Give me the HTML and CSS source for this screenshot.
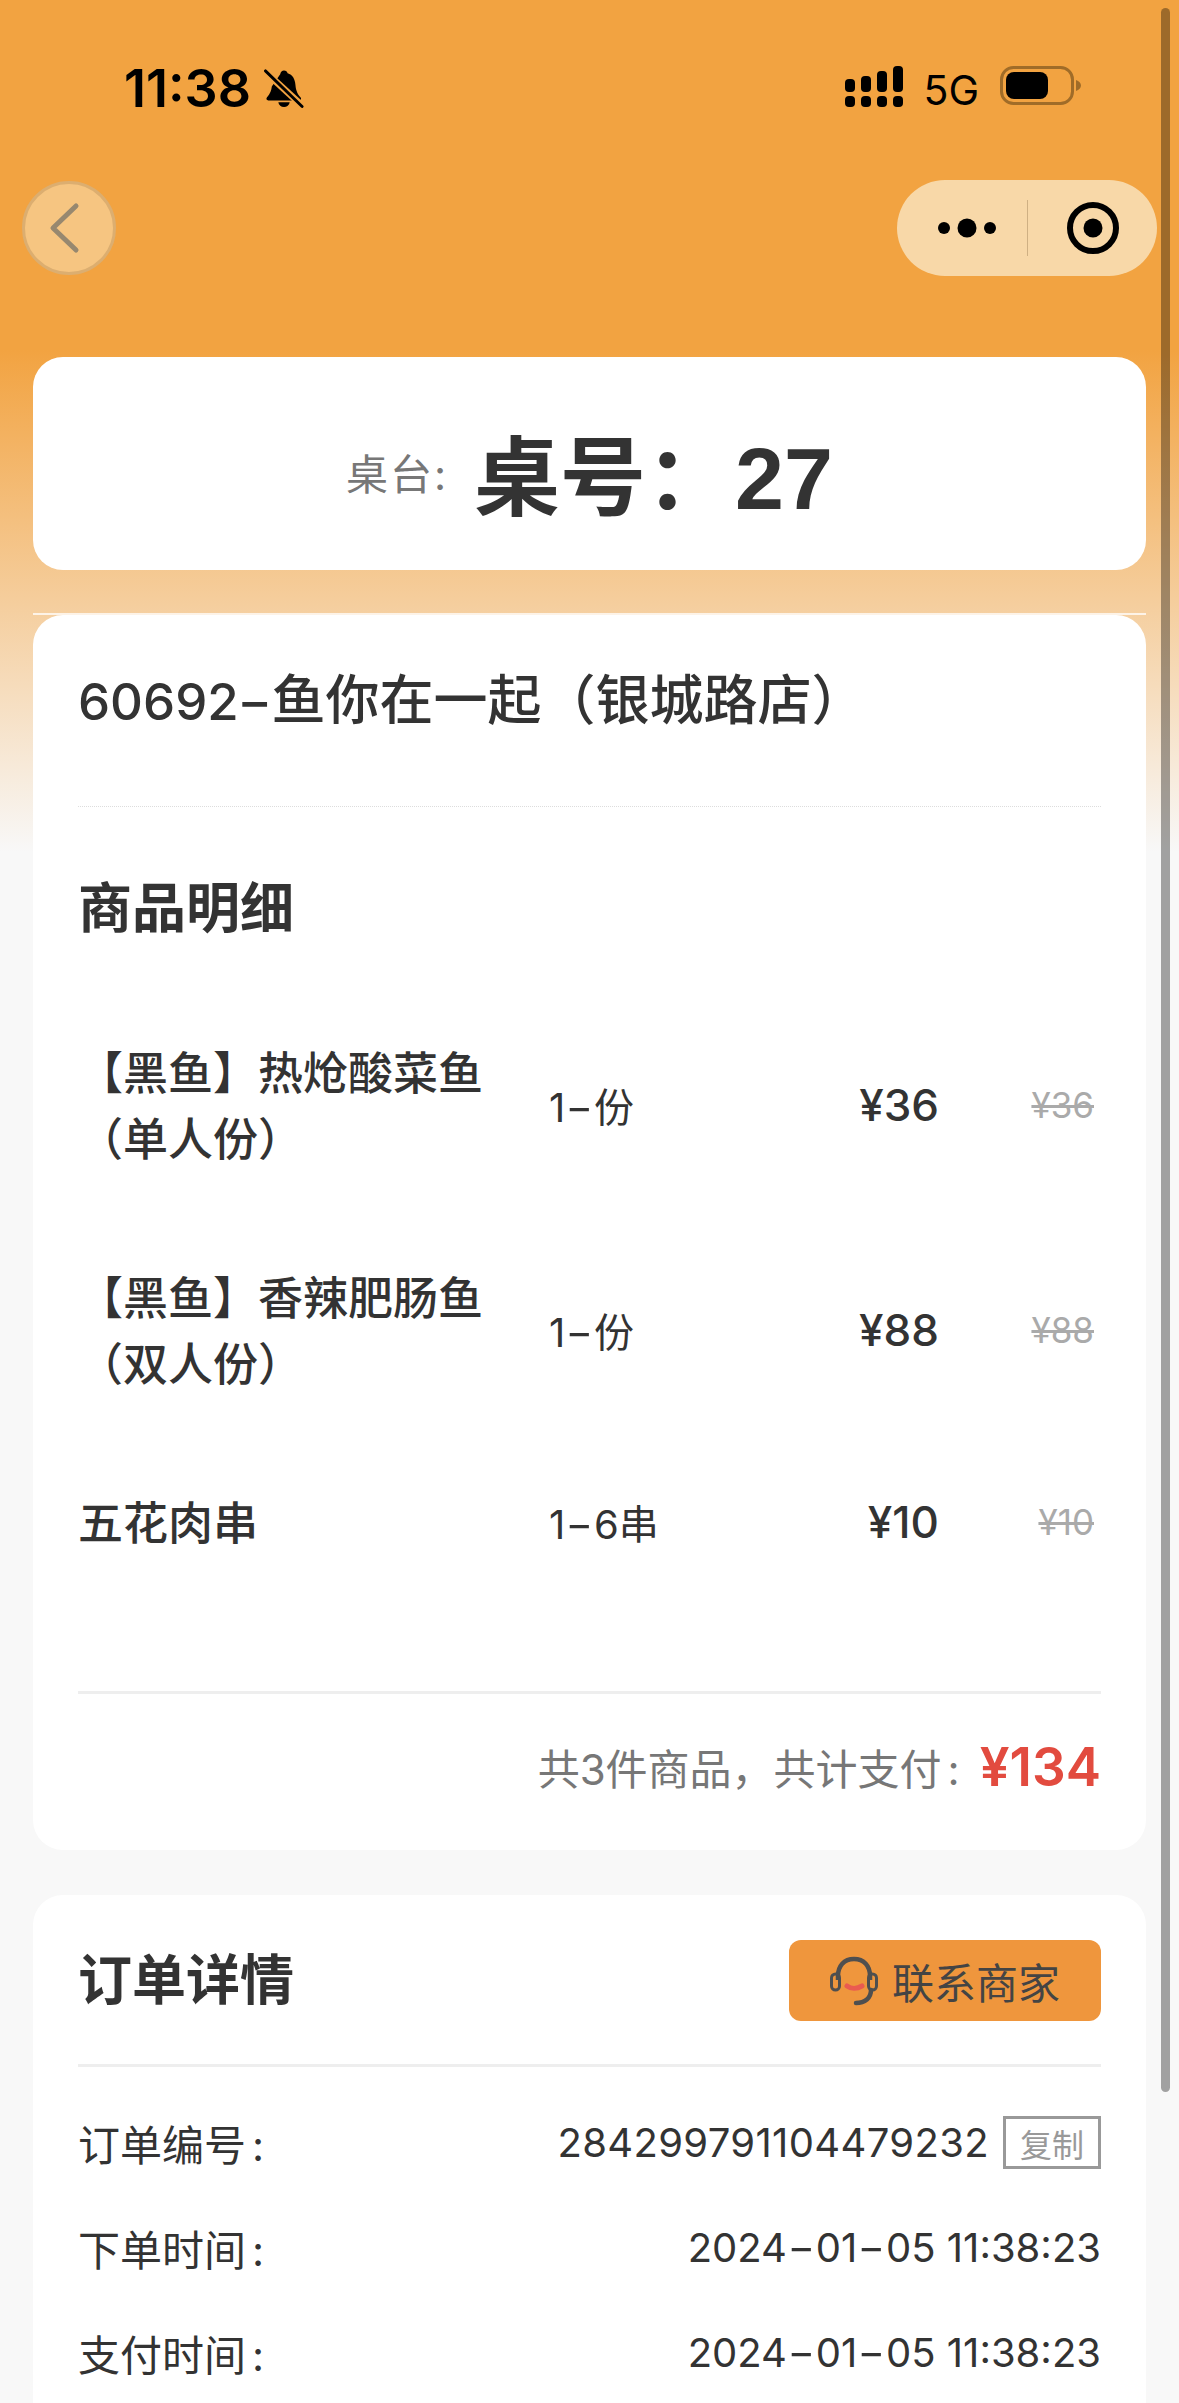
FILE: index.html
```html
<html>
<head>
	<meta charset="utf-8">
	<link rel="stylesheet" href="styles.css">
	<title>订单详情</title>
</head>
<body>
	<div id="scrollbar"></div>

	<div class="statusbar">
		<div class="statusleft">
			<span class="clock">11:38</span>
			<svg class="bell" width="40" height="41" viewBox="0 0 42 42">
				<path d="M21 2c2 0 3.500 1.300 3.800 3 5.200 1.500 7.700 6 8.200 12 .4 5 1.500 9 5.500 13.500 1 1.300.2 3-1.500 3H4.500c-1.700 0-2.500-1.700-1.500-3 3.500-3.800 4.800-7.500 5.200-11.500L17 6c.4-2.400 2-4 4-4z" fill="#000"/>
				<path d="M15 35.500h12c-.5 3-3 5-6 5s-5.500-2-6-5z" fill="#000"/>
				<path d="M3 5l36 33" stroke="#f2a341" stroke-width="7"/>
				<path d="M1.500 2.500L40 40" stroke="#000" stroke-width="3" stroke-linecap="round"/>
			</svg>
		</div>
		<div class="statusright">
			<svg width="58" height="41" viewBox="0 0 58 41">
				<rect x="0" y="13" width="10" height="13" rx="4"/><rect x="16" y="10" width="10" height="16" rx="4"/><rect x="32" y="5" width="10" height="21" rx="4"/><rect x="48" y="0" width="10" height="26" rx="4"/>
				<rect x="0" y="30" width="10" height="11" rx="4"/><rect x="16" y="30" width="10" height="11" rx="4"/><rect x="32" y="30" width="10" height="11" rx="4"/><rect x="48" y="30" width="10" height="11" rx="4"/>
			</svg>
			<span class="network">5G</span>
			<svg width="81" height="39" viewBox="0 0 81 39">
				<rect x="1.500" y="1.500" width="71" height="36" rx="12" fill="none" stroke="#a06c28" stroke-width="3"/>
				<rect x="6" y="6" width="42" height="27" rx="8" fill="#000"/>
				<path d="M76 14c3 1 5 3 5 5.500s-2 4.500-5 5.500z" fill="#a06c28"/>
			</svg>
		</div>
	</div>

	<div class="navbar">
		<div class="backbtn">
			<svg width="34" height="52" viewBox="0 0 34 52"><path d="M29 4L6 26l23 22" fill="none" stroke="#97886f" stroke-width="5" stroke-linecap="round" stroke-linejoin="round"/></svg>
		</div>
		<div class="capsule">
			<svg class="capsuledots" width="64" height="20" viewBox="0 0 64 20"><circle cx="6" cy="10" r="6"/><circle cx="29" cy="10" r="9.500"/><circle cx="52" cy="10" r="6"/></svg>
			<div class="capsuleline"></div>
			<svg class="capsuletarget" width="52" height="52" viewBox="0 0 52 52"><circle cx="26" cy="26" r="23" fill="none" stroke="#000" stroke-width="6"/><circle cx="26" cy="26" r="9.500"/></svg>
		</div>
	</div>

	<div class="tablecard">
		<span class="tablelabel">桌台:</span>
		<span class="tablevalue">桌号：<span class="tablenum">27</span></span>
	</div>
	<div class="whiteline"></div>

	<div class="card goodscard">
		<div class="storename"><span class="storenum">60692<span class="dash">-</span></span>鱼你在一起（银城路店）</div>
		<div class="sectiontitle">商品明细</div>
		<div class="goodsrow">
			<div class="goodsname">【黑鱼】热炝酸菜鱼（单人份）</div>
			<div class="goodsqty">1<span class="dash">-</span>份</div>
			<div class="goodsprice">¥36</div>
			<div class="goodsold">¥36</div>
		</div>
		<div class="goodsrow">
			<div class="goodsname">【黑鱼】香辣肥肠鱼（双人份）</div>
			<div class="goodsqty">1<span class="dash">-</span>份</div>
			<div class="goodsprice">¥88</div>
			<div class="goodsold">¥88</div>
		</div>
		<div class="goodsrow">
			<div class="goodsname">五花肉串</div>
			<div class="goodsqty">1<span class="dash">-</span>6串</div>
			<div class="goodsprice">¥10</div>
			<div class="goodsold">¥10</div>
		</div>
		<div class="totalrow">
			<span class="totallabel">共3件商品，共计支付<span class="colon">:</span></span>
			<span class="totalprice">¥134</span>
		</div>
	</div>

	<div class="card ordercard">
		<div class="orderhead">
			<div class="sectiontitle">订单详情</div>
			<div class="contactbtn">
				<svg width="48" height="50" viewBox="0 0 48 50">
					<path d="M8 24V20C8 10 14 3 24 3s16 7 16 17v4" fill="none" stroke="#4f4f4f" stroke-width="4.500"/>
					<rect x="1.500" y="18" width="8" height="16" rx="4" fill="none" stroke="#4f4f4f" stroke-width="3"/>
					<rect x="38.500" y="18" width="8" height="16" rx="4" fill="none" stroke="#4f4f4f" stroke-width="3"/>
					<path d="M41 34c0 8-6 13-15 13" fill="none" stroke="#4f4f4f" stroke-width="4.500" stroke-linecap="round"/>
					<path d="M17 30c4 3 10 3 15 0" fill="none" stroke="#ea5b50" stroke-width="5" stroke-linecap="round"/>
				</svg>
				<span>联系商家</span>
			</div>
		</div>
		<div class="orderrows">
			<div class="orderrow">
				<span>订单编号<span class="colon">:</span></span>
				<span class="ordervalue"><span class="ordernum">284299791104479232</span><span class="copybtn">复制</span></span>
			</div>
			<div class="orderrow">
				<span>下单时间<span class="colon">:</span></span>
				<span class="ordervalue"><span>2024<span class="dash">-</span>01<span class="dash">-</span>05 11:38:23</span></span>
			</div>
			<div class="orderrow">
				<span>支付时间<span class="colon">:</span></span>
				<span class="ordervalue"><span>2024<span class="dash">-</span>01<span class="dash">-</span>05 11:38:23</span></span>
			</div>
		</div>
	</div>
</body>
</html>
```

FILE: styles.css
```css
html,body{
	margin: 0;
	height: 2403px;
	overflow: hidden;
}
body{
	position: relative;
	background: linear-gradient(#f2a341 0px, #f2a341 350px, #f8f8f8 852px);
	font-family: 'Inter', 'Noto Sans CJK SC', sans-serif;
	color: #333;
}
#scrollbar{
	position: absolute;
	top: 8px;
	left: 1161px;
	width: 9px;
	height: 2084px;
	border-radius: 5px;
	background-color: rgba(0,0,0,0.35);
}
.dash{
	display: inline-block;
	margin: 0 .13em;
	transform: scaleX(1.5);
}
.colon{
	margin-left: 6px;
}
.statusbar{
	height: 180px;
	display: flex;
	justify-content: space-between;
	box-sizing: border-box;
	padding: 66px 98px 0 124px;
}
.statusleft{
	display: flex;
	align-items: flex-start;
}
.clock{
	font-size: 52px;
	font-weight: 600;
	line-height: 46px;
	color: #000;
}
.bell{
	margin-left: 13px;
	margin-top: 2px;
}
.statusright{
	display: flex;
	align-items: flex-start;
	padding-left: 2px;
}
.network{
	font-size: 41px;
	line-height: 48px;
	color: #000;
	margin: 0 21px 0 20px;
}
.navbar{
	height: 96px;
	display: flex;
	justify-content: space-between;
	align-items: center;
	padding: 0 22px;
}
.backbtn{
	width: 94px;
	height: 94px;
	box-sizing: border-box;
	border: 3px solid #dcae70;
	border-radius: 50%;
	background-color: #f6c581;
	display: flex;
	align-items: center;
	justify-content: center;
	padding-right: 10px;
}
.capsule{
	width: 260px;
	height: 96px;
	border-radius: 48px;
	background-color: #f8d8a8;
	display: flex;
	align-items: center;
}
.capsuledots{
	margin-left: 41px;
}
.capsuleline{
	width: 1px;
	height: 56px;
	background-color: #cfb083;
	margin-left: 25px;
}
.capsuletarget{
	margin-left: 39px;
}
.tablecard{
	margin: 81px 33px 0;
	height: 213px;
	box-sizing: border-box;
	padding-top: 16px;
	border-radius: 30px;
	background-color: #fff;
	display: flex;
	align-items: center;
	justify-content: center;
}
.tablelabel{
	font-size: 42px;
	letter-spacing: 2px;
	color: #777;
	margin-right: 26px;
}
.tablevalue{
	font-size: 86px;
	font-weight: bold;
}
.tablenum{
	font-family: 'Liberation Sans', sans-serif;
	font-size: 88px;
	margin-left: 3px;
}
.whiteline{
	margin: 43px 33px 0;
	height: 2px;
	background-color: rgba(255,255,255,0.75);
}
.card{
	margin: 0 33px;
	padding: 0 45px;
	border-radius: 30px;
	background-color: #fff;
}
.storename{
	font-size: 54px;
	font-weight: 500;
	line-height: 66px;
	padding: 53px 0 71px;
	border-bottom: 1px dotted #ddd;
}
.storenum{
	font-size: 51px;
}
.storenum .dash{
	margin: 0 .09em;
}
.sectiontitle{
	font-size: 54px;
	font-weight: 600;
	line-height: 70px;
}
.goodscard .sectiontitle{
	margin: 67px 0 50px;
}
.goodsrow{
	display: grid;
	grid-template-columns: 471px 1fr 100px 155px;
	align-items: center;
	padding: 47px 7px 46px 0;
}
.goodsname{
	width: 410px;
	font-size: 45px;
	font-weight: 500;
	line-height: 66px;
}
.goodsqty{
	font-size: 40px;
	margin-bottom: 4px;
}
.goodsprice{
	font-size: 44px;
	font-weight: 500;
	text-align: right;
	margin-bottom: 4px;
}
.goodsold{
	font-size: 35px;
	color: #aaa;
	text-align: right;
	text-decoration: line-through;
	margin-bottom: 4px;
}
.totalrow{
	margin-top: 88px;
	border-top: 3px solid #eee;
	padding: 43px 0 47px;
	display: flex;
	justify-content: flex-end;
	align-items: center;
	line-height: 66px;
}
.totallabel{
	font-size: 42px;
	color: #777;
}
.totalprice{
	font-size: 53px;
	font-weight: 600;
	color: #e24b3f;
	margin-left: 20px;
	margin-top: -6px;
}
.ordercard{
	margin-top: 45px;
	padding-bottom: 60px;
}
.orderhead{
	display: flex;
	justify-content: space-between;
	align-items: center;
	padding: 45px 0 43px;
	border-bottom: 3px solid #eee;
}
.contactbtn{
	width: 312px;
	height: 81px;
	box-sizing: border-box;
	padding-left: 41px;
	border-radius: 12px;
	background-color: #ef963d;
	display: flex;
	align-items: center;
	font-size: 42px;
	color: #444;
}
.contactbtn span{
	margin-left: 14px;
}
.orderrows{
	padding-top: 23px;
}
.orderrow{
	height: 105px;
	display: flex;
	justify-content: space-between;
	align-items: center;
	font-size: 42px;
}
.ordervalue{
	display: flex;
	align-items: center;
	font-size: 40px;
}
.ordernum{
	letter-spacing: .35px;
}
.copybtn{
	width: 98px;
	height: 53px;
	box-sizing: border-box;
	border: 3px solid #999;
	margin-left: 14px;
	font-size: 32px;
	color: #999;
	display: flex;
	align-items: center;
	justify-content: center;
}
```
